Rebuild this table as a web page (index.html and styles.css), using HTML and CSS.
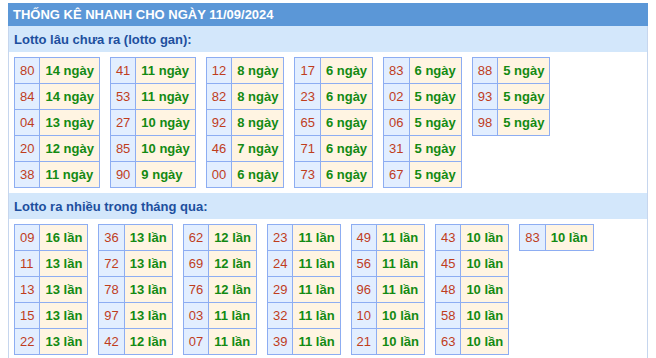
FILE: index.html
```html
<!DOCTYPE html>
<html lang="vi">
<head>
<meta charset="utf-8">
<title>Thống kê nhanh</title>
<link rel="stylesheet" href="styles.css">
</head>
<body>
<div class="panel">
  <div class="panel-title">THỐNG KÊ NHANH CHO NGÀY 11/09/2024</div>
  <div class="panel-body">
    <div class="sub">Lotto lâu chưa ra (lotto gan):</div>
    <div class="tables">
      <table class="lt"><tr><td class="n">80</td><td class="v">14 ngày</td></tr><tr><td class="n">84</td><td class="v">14 ngày</td></tr><tr><td class="n">04</td><td class="v">13 ngày</td></tr><tr><td class="n">20</td><td class="v">12 ngày</td></tr><tr><td class="n">38</td><td class="v">11 ngày</td></tr></table>
      <table class="lt"><tr><td class="n">41</td><td class="v">11 ngày</td></tr><tr><td class="n">53</td><td class="v">11 ngày</td></tr><tr><td class="n">27</td><td class="v">10 ngày</td></tr><tr><td class="n">85</td><td class="v">10 ngày</td></tr><tr><td class="n">90</td><td class="v">9 ngày</td></tr></table>
      <table class="lt"><tr><td class="n">12</td><td class="v">8 ngày</td></tr><tr><td class="n">82</td><td class="v">8 ngày</td></tr><tr><td class="n">92</td><td class="v">8 ngày</td></tr><tr><td class="n">46</td><td class="v">7 ngày</td></tr><tr><td class="n">00</td><td class="v">6 ngày</td></tr></table>
      <table class="lt"><tr><td class="n">17</td><td class="v">6 ngày</td></tr><tr><td class="n">23</td><td class="v">6 ngày</td></tr><tr><td class="n">65</td><td class="v">6 ngày</td></tr><tr><td class="n">71</td><td class="v">6 ngày</td></tr><tr><td class="n">73</td><td class="v">6 ngày</td></tr></table>
      <table class="lt"><tr><td class="n">83</td><td class="v">6 ngày</td></tr><tr><td class="n">02</td><td class="v">5 ngày</td></tr><tr><td class="n">06</td><td class="v">5 ngày</td></tr><tr><td class="n">31</td><td class="v">5 ngày</td></tr><tr><td class="n">67</td><td class="v">5 ngày</td></tr></table>
      <table class="lt"><tr><td class="n">88</td><td class="v">5 ngày</td></tr><tr><td class="n">93</td><td class="v">5 ngày</td></tr><tr><td class="n">98</td><td class="v">5 ngày</td></tr></table>
    </div>
    <div class="sub">Lotto ra nhiều trong tháng qua:</div>
    <div class="tables">
      <table class="lt"><tr><td class="n">09</td><td class="v">16 lần</td></tr><tr><td class="n">11</td><td class="v">13 lần</td></tr><tr><td class="n">13</td><td class="v">13 lần</td></tr><tr><td class="n">15</td><td class="v">13 lần</td></tr><tr><td class="n">22</td><td class="v">13 lần</td></tr></table>
      <table class="lt"><tr><td class="n">36</td><td class="v">13 lần</td></tr><tr><td class="n">72</td><td class="v">13 lần</td></tr><tr><td class="n">78</td><td class="v">13 lần</td></tr><tr><td class="n">97</td><td class="v">13 lần</td></tr><tr><td class="n">42</td><td class="v">12 lần</td></tr></table>
      <table class="lt"><tr><td class="n">62</td><td class="v">12 lần</td></tr><tr><td class="n">69</td><td class="v">12 lần</td></tr><tr><td class="n">76</td><td class="v">12 lần</td></tr><tr><td class="n">03</td><td class="v">11 lần</td></tr><tr><td class="n">07</td><td class="v">11 lần</td></tr></table>
      <table class="lt"><tr><td class="n">23</td><td class="v">11 lần</td></tr><tr><td class="n">24</td><td class="v">11 lần</td></tr><tr><td class="n">29</td><td class="v">11 lần</td></tr><tr><td class="n">32</td><td class="v">11 lần</td></tr><tr><td class="n">39</td><td class="v">11 lần</td></tr></table>
      <table class="lt"><tr><td class="n">49</td><td class="v">11 lần</td></tr><tr><td class="n">56</td><td class="v">11 lần</td></tr><tr><td class="n">96</td><td class="v">11 lần</td></tr><tr><td class="n">10</td><td class="v">10 lần</td></tr><tr><td class="n">21</td><td class="v">10 lần</td></tr></table>
      <table class="lt"><tr><td class="n">43</td><td class="v">10 lần</td></tr><tr><td class="n">45</td><td class="v">10 lần</td></tr><tr><td class="n">48</td><td class="v">10 lần</td></tr><tr><td class="n">58</td><td class="v">10 lần</td></tr><tr><td class="n">63</td><td class="v">10 lần</td></tr></table>
      <table class="lt"><tr><td class="n">83</td><td class="v">10 lần</td></tr></table>
    </div>
  </div>
</div>
</body>
</html>
```
FILE: styles.css
```css
html, body {
  margin: 0;
  padding: 0;
  background: #ffffff;
}
body {
  padding: 3px 8px 0 8px;
  font-family: "Liberation Sans", Arial, sans-serif;
  font-size: 13px;
  line-height: 15px;
}
.panel {
  width: 640px;
}
.panel-title {
  background: #5b97d7;
  color: #ffffff;
  font-weight: bold;
  font-size: 13px;
  line-height: 15px;
  padding: 4px 5px;
}
.panel-body {
  border-left: 1px solid #c6d6ee;
  border-right: 1px solid #c6d6ee;
  min-height: 340px;
}
.sub {
  background: #d3e7fb;
  color: #1d4f9e;
  font-weight: bold;
  padding: 6px 5px 5px 5px;
}
.tables {
  display: flex;
  flex-wrap: wrap;
  align-items: flex-start;
  gap: 10px;
  padding: 5px 5px;
}
.lt {
  border-collapse: collapse;
}
.lt td {
  border: 1px solid #8dadf2;
  padding: 5px;
  line-height: 15px;
  text-align: left;
  white-space: nowrap;
}
.lt .n {
  background: #e2eeff;
  color: #bf3d1d;
}
.lt .v {
  background: #fff4e2;
  color: #138a13;
  font-weight: bold;
}
```
